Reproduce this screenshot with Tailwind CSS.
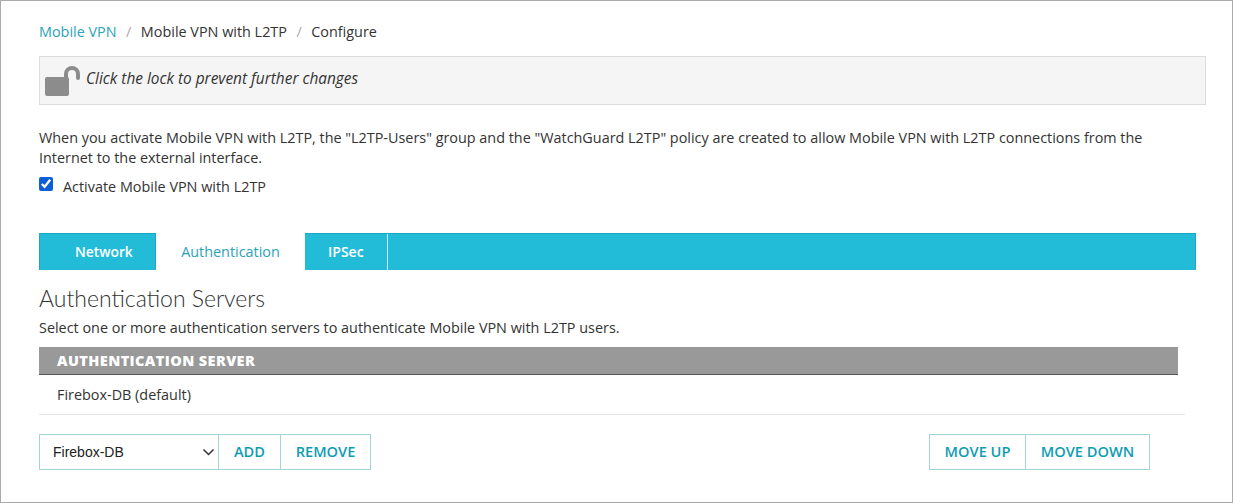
<!DOCTYPE html>
<html lang="en">
<head>
  <meta charset="UTF-8" />
  <title>Mobile VPN with L2TP</title>
  <script src="https://cdn.jsdelivr.net/npm/@tailwindcss/browser@4"></script>
</head>
<body class="bg-white">
  <div class="w-[1233px] h-[503px] overflow-hidden border border-[#ababab] pl-[38px] text-[14.4px] text-[#333] font-['Open_Sans',sans-serif]">

    <!-- Breadcrumb -->
    <nav class="flex items-center h-[20px] mt-[21px] leading-[20px]">
      <a href="#" class="text-[#2ba3b8]">Mobile VPN</a>
      <span class="mx-[9.500px] text-[#aaa]">/</span>
      <span>Mobile VPN with L2TP</span>
      <span class="mx-[9.500px] text-[#aaa]">/</span>
      <span>Configure</span>
    </nav>

    <!-- Lock bar -->
    <div class="flex items-center w-[1167px] h-[49px] mt-[14px] bg-[#f5f5f5] border border-[#dcdcdc] pl-[4px]">
      <svg width="37" height="32" viewBox="0 0 37 32" class="mb-[1px]">
        <rect x="1" y="13" width="24" height="19" rx="2" fill="#8c8c8c" />
        <path d="M22 15V10a6 6 0 0 1 12 0v4" fill="none" stroke="#8c8c8c" stroke-width="4" stroke-linecap="round" />
      </svg>
      <span class="italic ml-[5px] mb-[3px] text-[15.4px]">Click the lock to prevent further changes</span>
    </div>

    <!-- Intro -->
    <p class="w-[1150px] mt-[23px] leading-[20px]">When you activate Mobile VPN with L2TP, the "L2TP-Users" group and the "WatchGuard L2TP" policy are created to allow Mobile VPN with L2TP connections from the Internet to the external interface.</p>
    <label class="flex items-center h-[20px] mt-[8px]">
      <input type="checkbox" checked class="w-[14px] h-[14px] m-0 accent-[#0b5fd6] mb-[5px]" />
      <span class="ml-[10px] mt-px">Activate Mobile VPN with L2TP</span>
    </label>

    <!-- Tabs -->
    <div class="flex w-[1157px] h-[37px] mt-[37px] bg-[#22bcd9] border border-[#1ba8c4] border-b-0">
      <a href="#" class="w-[116px] pl-[35px] leading-[35px] text-[13.800px] font-semibold text-white border-r border-[#1ba8c4]">Network</a>
      <a href="#" class="w-[149px] h-[37px] -mt-px text-center leading-[37px] bg-white text-[#2ba3b8]">Authentication</a>
      <a href="#" class="w-[83px] pl-[23px] leading-[35px] text-[14px] font-semibold text-white border-r border-[#d5f1f7]">IPSec</a>
    </div>

    <!-- Servers -->
    <h2 class="mt-[15px] text-[23px] leading-[26px] font-light text-[#333] font-['Lato',sans-serif]">Authentication Servers</h2>
    <p class="mt-[7px] leading-[20px]">Select one or more authentication servers to authenticate Mobile VPN with L2TP users.</p>

    <div class="w-[1146px] mt-[9px]">
      <div class="w-[1139px] h-[28px] bg-[#999] border-b border-[#555] pl-[18px] leading-[28px] text-[14.5px] tracking-[0.4px] font-extrabold text-white">AUTHENTICATION SERVER</div>
      <div class="h-[40px] pl-[18px] leading-[39px] border-b border-[#e3e3e3]">Firebox-DB (default)</div>
    </div>

    <!-- Controls -->
    <div class="flex justify-between w-[1111px] mt-[19px] text-[14.6px] text-[#0e9cb4] font-semibold">
      <div class="flex h-[36px] border border-[#a3d6da]">
        <div class="flex items-center justify-between w-[178px] pl-[13px] pr-[3px] font-normal text-[14px] text-[#222] font-['Liberation_Sans',sans-serif]">
          <span>Firebox-DB</span>
          <svg width="13" height="8" viewBox="0 0 13 8"><path d="M1.500 1.500l5 5 5-5" fill="none" stroke="#333" stroke-width="1.500" /></svg>
        </div>
        <button class="w-[62px] border-l border-[#a3d6da]">ADD</button>
        <button class="w-[90px] border-l border-[#a3d6da]">REMOVE</button>
      </div>
      <div class="flex h-[36px] border border-[#a3d6da]">
        <button class="w-[95px]">MOVE UP</button>
        <button class="w-[124px] border-l border-[#a3d6da]">MOVE DOWN</button>
      </div>
    </div>
  </div>
</body>
</html>
